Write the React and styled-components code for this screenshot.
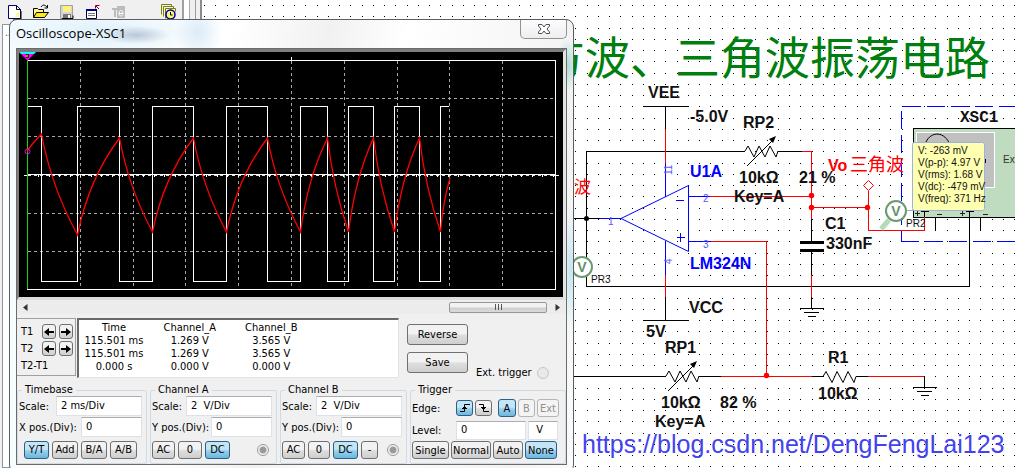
import styled, { createGlobalStyle, css } from "styled-components";

const GlobalStyle = createGlobalStyle`
  * {
    box-sizing: border-box;
  }
  body {
    margin: 0;
    background: #ffffff;
    font-family: "DejaVu Sans Condensed", "DejaVu Sans", sans-serif;
    font-size: 11px;
    color: #000000;
  }
`;

const Desktop = styled.div`
  position: relative;
  display: flex;
  height: 100vh;
  overflow: hidden;
`;

const SidePane = styled.div`
  display: flex;
  width: 202px;
  flex: none;
  background: #f0f0f0;
  border-right: 2px solid #8c8c8c;
`;

const SideColumn = styled.div`
  display: flex;
  flex-direction: column;
  width: 184px;
  border-right: 2px solid #a0a0a0;
`;

const Splitter = styled.div`
  width: 12px;
  border-right: 1px solid #9a9a9a;
  background: linear-gradient(90deg, #ffffff 5px, #a8a8a8 5px, #a8a8a8 6px, #f0f0f0 6px);
`;

const Toolbar = styled.div`
  display: flex;
  align-items: flex-end;
  gap: 10px;
  height: 24px;
  padding: 0 0 4px 7px;
`;

const ToolButton = styled.button`
  display: flex;
  width: 16px;
  height: 16px;
  padding: 0;
  border: none;
  background: none;
  &:last-child {
    margin-left: 23px;
  }
`;

const TreePane = styled.div`
  flex: 1;
  margin-left: 2px;
  padding: 2px;
  border: 1px solid #8a96a0;
  background: #ffffff;
  color: #555555;
  font-size: 10px;
  line-height: 12px;
`;

const Sheet = styled.div`
  flex: 1;
  min-width: 0;
  svg {
    display: block;
    width: 100%;
    height: 100%;
  }
`;

const Label = styled.text`
  font-family: "Liberation Sans", Arial, sans-serif;
  font-size: ${(props) => props.$size || 16}px;
  font-weight: ${(props) => (props.$plain ? 400 : 700)};
  fill: ${(props) => props.$color || "#111111"};
`;

const HanLabel = styled(Label)`
  font-family: "Noto Sans CJK SC", sans-serif;
  font-weight: 400;
`;

const MonoLabel = styled(Label)`
  font-family: "Liberation Mono", monospace;
`;

// the instrument window floats over the sheet
const Window = styled.section`
  position: absolute;
  left: 9px;
  top: 19px;
  width: 565px;
  padding: 0 6px 7px;
  border: 1px solid #5a5f63;
  border-radius: 8px;
  background:
    radial-gradient(ellipse 12px 26px at 557px 45px, #a9dcd0, transparent),
    radial-gradient(ellipse 10px 60px at 561px 250px, #c4e6f0, transparent),
    radial-gradient(ellipse 34px 9px at 126px 15px, #b9c8d8, transparent),
    radial-gradient(ellipse 24px 30px at 188px 12px, #dcebf8, transparent),
    radial-gradient(ellipse 110px 26px at 90px 12px, #dff0fa, transparent),
    linear-gradient(100deg, #f4fbff 0%, #ffffff 35%, #f1f1f1 50%, #ffffff 62%, #f3f3f3 90%, #fcfcfc 100%);
`;

const TitleBar = styled.header`
  display: flex;
  justify-content: space-between;
  align-items: flex-start;
  height: 28px;
`;

const WindowTitle = styled.h1`
  margin: 0;
  font: 400 13px/27px "Open Sans", sans-serif;
`;

const CloseButton = styled.button`
  display: flex;
  align-items: center;
  justify-content: center;
  width: 47px;
  height: 19px;
  padding: 0;
  border: 1px solid #8e9296;
  border-top: none;
  border-radius: 0 0 5px 5px;
  background: linear-gradient(#fdfdfd, #eeeeee);
`;

const Client = styled.div`
  border: 1px solid #6b6b6b;
  background: #f0f0f0;
`;

const Screen = styled.div`
  border-style: solid;
  border-width: 3px 3px 3px 2px;
  border-color: #7e7e7e #e4e4e4 #dcdcdc #7e7e7e;
  background: #000000;
  svg {
    display: block;
    width: 100%;
    height: 245px;
  }
`;

const ScrollBar = styled.div`
  display: flex;
  align-items: center;
  justify-content: space-between;
  height: 14px;
  padding: 0 6px;
  background: #ececec;
`;

const Thumb = styled.button`
  display: flex;
  align-items: center;
  justify-content: center;
  gap: 2px;
  width: 98px;
  height: 11px;
  margin: 0 8px 0 auto;
  padding: 0;
  border: 1px solid #979797;
  border-radius: 2px;
  background: linear-gradient(#f2f2f2 45%, #cfcfcf 55%, #dadada);
`;

const Grip = styled.span`
  width: 1px;
  height: 6px;
  background: #555555;
`;

const Readings = styled.div`
  display: flex;
  align-items: flex-start;
  margin: 4px 0 8px;
  height: 58px;
`;

const Cursors = styled.div`
  display: grid;
  grid-template-columns: 18px 14px 14px;
  column-gap: 3px;
  grid-template-rows: 17px 17px 16px;
  align-items: center;
  width: 59px;
  height: 58px;
  padding: 4px 0 0 4px;
  border-right: 1px solid #a0a0a0;
  border-bottom: 1px solid #a0a0a0;
  border-top: 1px solid #a0a0a0;
  margin-right: 1px;
`;

const CursorName = styled.span`
  white-space: nowrap;
`;

const ReadTable = styled.table`
  width: 322px;
  height: 58px;
  padding: 1px 86px 4px 0;
  border: 1px solid #dfe3e6;
  border-top: 2px solid #696969;
  border-left: 2px solid #696969;
  border-spacing: 0;
  background: #ffffff;
  table-layout: fixed;
  th,
  td {
    padding: 0;
    font-weight: 400;
    line-height: 13px;
    text-align: center;
    white-space: nowrap;
  }
  th:first-child {
    width: 70px;
  }
`;

const Actions = styled.div`
  display: flex;
  flex-direction: column;
  gap: 7px;
  padding: 6px 0 0 8px;
`;

const pressed = css`
  border-color: #2c5f85;
  background: linear-gradient(#c4e5f6 45%, #98d1ef 55%, #6db6dd);
`;

const Button = styled.button`
  display: flex;
  align-items: center;
  justify-content: center;
  width: ${(props) => props.$w}px;
  height: ${(props) => props.$h || 18}px;
  padding: 0;
  border: 1px solid #707070;
  border-radius: 3px;
  background: linear-gradient(#f2f2f2 45%, #dddddd 55%, #cfcfcf);
  font: inherit;
  color: #000000;
  ${(props) => props.$on && pressed}
  &:disabled {
    border-color: #b4b4b4;
    background: #f4f4f4;
    color: #909090;
  }
`;

const ExtTrigger = styled.label`
  display: flex;
  align-items: center;
  gap: 5px;
  margin: 48px 0 0 8px;
  white-space: nowrap;
`;

const Radio = styled.input`
  appearance: none;
  width: 12px;
  height: 12px;
  margin: 0;
  border: 1px solid ${(props) => (props.disabled ? "#c6c6c6" : "#9a9a9a")};
  border-radius: 50%;
  background: #e9e9e9;
  &:checked {
    background: radial-gradient(circle, #9a9a9a 3px, #f4f4f4 4px);
  }
`;

const Groups = styled.div`
  display: grid;
  grid-template-columns: 130px 127px 127px 1fr;
  gap: 3px;
`;

const Group = styled.fieldset`
  min-width: 0;
  margin: 0;
  padding: 0 4px 3px 1px;
  border: 1px solid #d0dbe3;
  border-radius: 2px;
`;

const Legend = styled.legend`
  margin-left: 3px;
  padding: 0 3px;
  line-height: 12px;
`;

const Field = styled.label`
  display: flex;
  align-items: center;
  justify-content: space-between;
  height: 20px;
  margin-bottom: 1px;
  white-space: nowrap;
`;

const TextBox = styled.input`
  width: ${(props) => props.$w}px;
  height: ${(props) => props.$h || 20}px;
  padding: 0 0 1px 4px;
  border: 1px solid #dde2ea;
  border-top-color: #abadb3;
  background: #ffffff;
  font: inherit;
  color: #000000;
`;

const ButtonRow = styled.div`
  display: flex;
  align-items: center;
  gap: 3px;
  height: 19px;
  margin-top: 3px;
  padding-left: ${(props) => props.$indent || 0}px;
  ${Radio} {
    margin: 0 3px 0 auto;
  }
`;

const TriggerRow = styled.div`
  display: flex;
  align-items: center;
  gap: 2px;
  height: ${(props) => props.$h}px;
`;

const TriggerName = styled.label`
  width: 42px;
`;

const Spacer = styled.span`
  width: 2px;
`;

const gridX = [80, 133, 185, 238, 291, 344, 397, 449, 502];
const gridY = [98, 136, 213, 251];

// x positions where the square wave falls and rises in turn
const edges = [41, 77, 119, 152, 193, 226, 267, 300, 327, 348, 373, 394, 419, 440];

const squarePath =
  "M27 106.5" +
  edges.map((x, i) => `H${x + 0.5}V${i % 2 ? 106.5 : 281.5}`).join("") +
  "H449";

const rampPoints = edges.map((x, i) => [x + 0.5, i % 2 ? (i === 1 ? 235 : 232) : i ? 138 : 134]);

const rampPath = rampPoints.slice(1).reduce((d, [x, y], i) => {
  const [px, py] = rampPoints[i];
  const ky = y > py ? 0.52 : 0.58;
  return `${d}Q${px + (x - px) * 0.27} ${py + (y - py) * ky} ${x} ${y}`;
}, "M27 151L34 142L41.5 134");

const axisTicks = Array.from({ length: 50 }, (_, i) => `M${38 + Math.round(i * 10.5)} 175v2`).join("");

const ZIGZAG = "l3 -5l6 11l5 -11l6 11l5 -11l6 11l2 -6";

function ScopeTrace() {
  return (
    <svg viewBox="19 52 544 245" preserveAspectRatio="none" fill="none">
      <g shapeRendering="crispEdges">
        <g stroke="#a8a8a8" strokeDasharray="3 3">
          {gridX.map((x) => (
            <path key={x} d={`M${x + 0.5} 61V289`} />
          ))}
          {gridY.map((y) => (
            <path key={y} d={`M28 ${y + 0.5}H553`} />
          ))}
        </g>
        <path d="M27 60.5H555.5V289.5H27" stroke="#fff" />
        <path d="M24 175.5H28M28 174.5H555M554 175.5H559M291.5 57V61" stroke="#fff" />
        <path d="M28 175.5H555" stroke="#ddd" strokeDasharray="3 3" />
        <path d={axisTicks} stroke="#fff" />
        <path d={squarePath} stroke="#fff" />
        <path d="M27.5 60V289" stroke="#12d912" />
      </g>
      <path d={`${rampPath}Q443 202 450 178`} stroke="#f00" strokeWidth="1.3" />
      <circle cx="27.5" cy="151.5" r="2.5" stroke="#e0e" />
      <path d="M19 52H36L27.500 60.500Z" fill="#f0f" />
      <path d="M19 52H36L34 54H21Z" fill="#0ff" />
      <path d="M26 54.500h2.500v1.500h-1.500h1.500v1.500h-2.500" stroke="#220" />
      <path d="M27 55v2" stroke="#ee0" />
    </svg>
  );
}

function Ground({ x, y }) {
  return <path d={`M${x - 12} ${y}h24M${x - 8} ${y + 4}h15M${x - 4} ${y + 8}h8`} stroke="#000" />;
}

function Potentiometer({ x, y }) {
  return (
    <g>
      <path d={`M${x} ${y}${ZIGZAG}`} stroke="#000" />
      <path d={`M${x + 2} ${y + 15}l28 -28`} stroke="#000" />
      <path d={`M${x + 31} ${y - 15}l-7 3l4 4z`} fill="#000" />
    </g>
  );
}

function Probe({ x, y, handle }) {
  return (
    <g>
      {handle && <path d={`M${x - 7} ${y + 9}l-8 9`} stroke="#b4dcb4" strokeWidth="5" />}
      <circle cx={x} cy={y} r="10" fill="#fff" stroke="#6c9a70" strokeWidth="2" />
      <Label x={x} y={y + 5} $size={14} $color="#66906a" textAnchor="middle">
        V
      </Label>
    </g>
  );
}

function Schematic() {
  return (
    <svg fill="none">
      <defs>
        <pattern id="dots" width="45" height="45" patternUnits="userSpaceOnUse" x="204" y="5">
          <path
            d={[0, 11, 23, 34].map((y) => [0, 11, 23, 34].map((x) => `M${x} ${y}h1v1h-1z`).join("")).join("")}
            fill="#000"
            shapeRendering="crispEdges"
          />
        </pattern>
      </defs>
      <g transform="translate(-202 0)">
        <rect x="202" width="4000" height="3000" fill="url(#dots)" />
        <HanLabel x="540" y="75" $size={45} $color="#007f0e">
          方波、三角波振荡电路
        </HanLabel>

        <g shapeRendering="crispEdges">
          <g stroke="#000">
            <path d="M643 106.500H689M665.500 106V129M665.500 297V320M643 320.500H689" />
            <path d="M745 151.500H586.500V286.500H969.500V213M778 151.500H802" />
            <path d="M574 218.500H600M574 376.500H666M699 376.500H721M812 376.500H823M856 376.500H868M924.500 376V387" />
            <path d="M811.500 219V241M811.500 251V275M811.500 297V308" />
            <path d="M800 242.500H824M800 250.500H824" strokeWidth="3" />
          </g>
          <g stroke="#f00">
            <path d="M665.500 129V163M665.500 275V297M802 151.500H811.500V219M710 196.500H811" />
            <path d="M711 241.500H766.500V376M721 376.500H812M868 376.500H924M811.500 275V297" />
            <path d="M811 207.500H868M868.500 191V230.500H924.500V213" />
          </g>
          <g stroke="#00f">
            <path d="M665.500 163V197M665.500 241V275M600 218.500H621M689 196.500H710M689 241.500H711" />
            <path d="M676 200.500H684M677 237.500H685M680.500 233V242" />
            <path d="M903 106.500H1400M901 241.500H1400" strokeDasharray="18 6" />
            <path d="M901.500 111V241" strokeDasharray="18 6" />
          </g>
        </g>
        <path d="M621 218.500L688.500 185.500V251.500Z" stroke="#00f" />
        <path d="M868.500 180.500l5 5l-5 5l-5 -5z" fill="#fff" stroke="#f00" />
        <path d={`M823 376.500${ZIGZAG}`} stroke="#000" />
        <Potentiometer x={745} y={151} />
        <Potentiometer x={666} y={376} />
        <Ground x={812} y={308.5} />
        <Ground x={925} y={387.5} />
        <circle cx="586.500" cy="218.500" r="2.500" fill="#000" />
        {[
          [811.5, 195.5],
          [811.5, 207.5],
          [867.5, 207.5],
          [766.5, 375.5],
        ].map(([x, y]) => (
          <circle key={`${x}-${y}`} cx={x} cy={y} r="2.700" fill="#f00" />
        ))}

        <Label x="648" y="98">VEE</Label>
        <Label x="690" y="122">-5.0V</Label>
        <Label x="743" y="128">RP2</Label>
        <Label x="739" y="183">10kΩ</Label>
        <Label x="734" y="202">Key=A</Label>
        <Label x="799" y="183">21 %</Label>
        <Label x="825" y="229">C1</Label>
        <Label x="826" y="249">330nF</Label>
        <Label x="689" y="313">VCC</Label>
        <Label x="646" y="337">5V</Label>
        <Label x="665" y="353">RP1</Label>
        <Label x="661" y="408">10kΩ</Label>
        <Label x="720" y="408">82 %</Label>
        <Label x="655" y="427">Key=A</Label>
        <Label x="828" y="363">R1</Label>
        <Label x="818" y="399">10kΩ</Label>
        <Label x="690" y="177" $color="#00f">U1A</Label>
        <Label x="690" y="269" $color="#00f">LM324N</Label>
        <Label x="703" y="202" $size={10} $plain $color="#55f">2</Label>
        <Label x="703" y="248" $size={10} $plain $color="#55f">3</Label>
        <Label x="608" y="225" $size={10} $plain $color="#55f">1</Label>
        <Label transform="translate(672 175) rotate(-90)" $size={10} $plain $color="#55f">11</Label>
        <Label transform="translate(672 264) rotate(-90)" $size={10} $plain $color="#55f">4</Label>
        <Label x="828" y="171" $color="#f00">Vo</Label>
        <HanLabel x="850" y="171" $size={18} $color="#f00">三角波</HanLabel>
        <HanLabel x="574" y="193" $size={17} $color="#f00">波</HanLabel>
        <MonoLabel x="960" y="122">XSC1</MonoLabel>

        <rect x="913.500" y="128.500" width="300" height="89" fill="#c0dcc0" stroke="#000" />
        <rect x="916.500" y="132.500" width="78" height="55" fill="#c0c0c0" stroke="#fff" />
        <path d="M926 142C931 131 945 131 950 145" stroke="#000" />
        <path d="M985.500 159v4" stroke="#000" />
        <path d="M921 211.500h8M924.500 211v6M935.500 217v14M966 211.500h8M969.500 211v19M980.500 217v14" stroke="#000" />
        <path d="M915 213.500h5M917.500 211v5M937 214.500h5M960 213.500h5M962.500 211v5M983 214.500h5" stroke="#222" />
        <path d="M924.500 217V230.500" stroke="#f00" />
        <Label x="1003" y="163" $size={10} $plain $color="#333">Ext</Label>

        <rect x="912.500" y="142.500" width="72" height="68" rx="2" fill="#ffffb0" stroke="#9cb2dc" />
        <Label $size={10} $plain>
          <tspan x="918" y="154">V: -263 mV</tspan>
          <tspan x="918" y="166">V(p-p): 4.97 V</tspan>
          <tspan x="918" y="178">V(rms): 1.68 V</tspan>
          <tspan x="918" y="190">V(dc): -479 mV</tspan>
          <tspan x="918" y="202">V(freq): 371 Hz</tspan>
        </Label>
        <path d="M907 210.500H913" stroke="#9cb2dc" />
        <Probe x={896} y={211} handle />
        <Probe x={582} y={267} />
        <Label x="906" y="227" $size={10} $plain>PR2</Label>
        <Label x="591" y="283" $size={10} $plain>PR3</Label>
        <a href="https://blog.csdn.net/DengFengLai123">
          <Label x="582" y="453" $size={25} $plain $color="#4343ee">
            https://blog.csdn.net/DengFengLai123
          </Label>
        </a>
      </g>
    </svg>
  );
}

function ToolIcons() {
  return (
    <Toolbar>
      <ToolButton aria-label="New">
        <svg width="16" height="16" viewBox="0 0 16 16">
          <path d="M1.500 1.500h8l4 4v9h-12z" fill="#fff" stroke="#000080" />
          <path d="M9.500 1.500v4h4M14 7v8H6" fill="none" stroke="#000" />
          <path d="M9 10l3-2v5H8z" fill="#fff68a" />
        </svg>
      </ToolButton>
      <ToolButton aria-label="Open">
        <svg width="16" height="16" viewBox="0 0 16 16">
          <path d="M0.500 13.500v-9h4l1 1h5v3" fill="#fff68a" stroke="#000" />
          <path d="M0.500 13.500l3-5h12l-4 5z" fill="#ffe818" stroke="#000" />
          <path d="M8 3c2-3 4-2 6 0M14.500 1v3h-3" fill="none" stroke="#000" />
        </svg>
      </ToolButton>
      <ToolButton aria-label="Save circuit">
        <svg width="16" height="16" viewBox="0 0 16 16">
          <path d="M1.500 1.500h12v13h-12z" fill="#d4d4d4" stroke="#a0a0a0" />
          <path d="M4 2h8v6H4z" fill="#fff27a" />
          <path d="M4 10h8v4H4z" fill="#777" />
          <path d="M9 11h2v3H9z" fill="#fff" />
          <path d="M3 14.500h11v-3" fill="none" stroke="#000" />
        </svg>
      </ToolButton>
      <ToolButton aria-label="Properties">
        <svg width="16" height="16" viewBox="0 0 16 16">
          <path d="M1.500 5.500h10v9h-10z" fill="#fff" stroke="#000040" />
          <path d="M1 5h11v2H1z" fill="#000080" />
          <path d="M3 9.500h7M3 11.500h7" stroke="#777" />
          <path d="M14 5l-3-3M10.500 4.500v-3h4" stroke="#900020" fill="none" />
        </svg>
      </ToolButton>
      <ToolButton aria-label="Text" disabled>
        <svg width="16" height="16" viewBox="0 0 16 16">
          <path d="M6 2h8v12H6z" fill="#bcbcbc" />
          <path d="M1 5h6M4 5v8" stroke="#bbb" strokeWidth="2" />
          <path d="M8 9.500h4c0-4-4-4-4 0c0 3 3 3 4 1" stroke="#fff" fill="none" />
        </svg>
      </ToolButton>
      <ToolButton aria-label="History">
        <svg width="16" height="16" viewBox="0 0 16 16">
          <path d="M1.500 10.500v-10h10v2M3.500 12.500v-10h10v2M5.500 14.500v-10h10v3" fill="none" stroke="#808000" />
          <circle cx="10.500" cy="10.500" r="4.500" fill="#fff27a" stroke="#000090" strokeWidth="1.500" />
          <path d="M10.500 8v3h2" stroke="#000" fill="none" />
        </svg>
      </ToolButton>
    </Toolbar>
  );
}

function Arrow({ left }) {
  return (
    <svg width="10" height="8" viewBox="0 0 10 8">
      <path d={left ? "M0 4l5-4v3h5v2H5v3z" : "M10 4L5 0v3H0v2h5v3z"} fill="#000" />
    </svg>
  );
}

const readings = [
  ["115.501 ms", "1.269 V", "3.565 V"],
  ["115.501 ms", "1.269 V", "3.565 V"],
  ["0.000 s", "0.000 V", "0.000 V"],
];

function ScaleFields({ axis, scale }) {
  return (
    <>
      <Field>
        Scale:
        <TextBox $w={86} defaultValue={scale} />
      </Field>
      <Field>
        {axis} pos.(Div):
        <TextBox $w={61} defaultValue="0" />
      </Field>
    </>
  );
}

function Oscilloscope() {
  return (
    <Window>
      <TitleBar>
        <WindowTitle>Oscilloscope-XSC1</WindowTitle>
        <CloseButton aria-label="Close">
          <svg width="12" height="10" viewBox="0 0 12 10">
            <path
              d="M0.500 0.500h3.500l2 2.500l2 -2.500h3.500v1.500l-2.500 3l2.500 3v1.500h-3.500l-2 -2.500l-2 2.500h-3.500v-1.500l2.500 -3l-2.500 -3z"
              fill="#fff"
              stroke="#4a4f5c"
            />
          </svg>
        </CloseButton>
      </TitleBar>
      <Client>
        <Screen>
          <ScopeTrace />
        </Screen>
        <ScrollBar>
          <svg width="5" height="7" viewBox="0 0 5 7">
            <path d="M4.500 0v7L0 3.500z" fill="#333" />
          </svg>
          <Thumb aria-label="Scroll">
            <Grip />
            <Grip />
            <Grip />
          </Thumb>
          <svg width="5" height="7" viewBox="0 0 5 7">
            <path d="M0.500 0v7L5 3.500z" fill="#333" />
          </svg>
        </ScrollBar>

        <Readings>
          <Cursors>
            <CursorName>T1</CursorName>
            <Button $w={14} $h={15} aria-label="T1 left"><Arrow left /></Button>
            <Button $w={14} $h={15} aria-label="T1 right"><Arrow /></Button>
            <CursorName>T2</CursorName>
            <Button $w={14} $h={15} aria-label="T2 left"><Arrow left /></Button>
            <Button $w={14} $h={15} aria-label="T2 right"><Arrow /></Button>
            <CursorName>T2-T1</CursorName>
          </Cursors>
          <ReadTable>
            <thead>
              <tr>
                <th>Time</th>
                <th>Channel_A</th>
                <th>Channel_B</th>
              </tr>
            </thead>
            <tbody>
              {readings.map((row, i) => (
                <tr key={i}>
                  {row.map((cell, j) => (
                    <td key={j}>{cell}</td>
                  ))}
                </tr>
              ))}
            </tbody>
          </ReadTable>
          <Actions>
            <Button $w={61} $h={21}>Reverse</Button>
            <Button $w={61} $h={21}>Save</Button>
          </Actions>
          <ExtTrigger>
            Ext. trigger
            <Radio type="radio" disabled />
          </ExtTrigger>
        </Readings>

        <Groups>
          <Group>
            <Legend>Timebase</Legend>
            <ScaleFields axis="X" scale="2 ms/Div" />
            <ButtonRow $indent={5}>
              <Button $w={25} $on>Y/T</Button>
              <Button $w={26}>Add</Button>
              <Button $w={26}>B/A</Button>
              <Button $w={27}>A/B</Button>
            </ButtonRow>
          </Group>
          <Group>
            <Legend>Channel A</Legend>
            <ScaleFields axis="Y" scale="2  V/Div" />
            <ButtonRow>
              <Button $w={23}>AC</Button>
              <Button $w={24}>0</Button>
              <Button $w={25} $on>DC</Button>
              <Radio type="radio" name="chA" defaultChecked aria-label="Channel A terminal" />
            </ButtonRow>
          </Group>
          <Group>
            <Legend>Channel B</Legend>
            <ScaleFields axis="Y" scale="2  V/Div" />
            <ButtonRow>
              <Button $w={23}>AC</Button>
              <Button $w={22}>0</Button>
              <Button $w={25} $on>DC</Button>
              <Button $w={17}>-</Button>
              <Radio type="radio" name="chB" defaultChecked aria-label="Channel B terminal" />
            </ButtonRow>
          </Group>
          <Group>
            <Legend>Trigger</Legend>
            <TriggerRow $h={24}>
              <TriggerName as="span">Edge:</TriggerName>
              <Button $w={17} $h={16} $on aria-label="Rising edge">
                <svg width="10" height="10" viewBox="0 0 10 10" fill="none" stroke="#000">
                  <path d="M0 8.500h4.500v-7H10M2 5.500h5M3 4.500h3" />
                </svg>
              </Button>
              <Button $w={17} $h={16} aria-label="Falling edge">
                <svg width="10" height="10" viewBox="0 0 10 10" fill="none" stroke="#000">
                  <path d="M0 1.500h4.500v7H10M2 4.500h5M3 5.500h3" />
                </svg>
              </Button>
              <Spacer />
              <Button $w={18} $on>A</Button>
              <Button $w={17} disabled>B</Button>
              <Button $w={22} disabled>Ext</Button>
            </TriggerRow>
            <TriggerRow $h={20}>
              <TriggerName htmlFor="level">Level:</TriggerName>
              <TextBox id="level" $w={70} $h={19} defaultValue="0" />
              <TextBox aria-label="Level unit" $w={30} $h={19} defaultValue=" V" />
            </TriggerRow>
            <TriggerRow $h={20}>
              <Button $w={37}>Single</Button>
              <Button $w={40}>Normal</Button>
              <Button $w={30}>Auto</Button>
              <Button $w={32} $on>None</Button>
            </TriggerRow>
          </Group>
        </Groups>
      </Client>
    </Window>
  );
}

export default function App() {
  return (
    <>
      <GlobalStyle />
      <Desktop>
        <SidePane>
          <SideColumn>
            <ToolIcons />
            <TreePane>..</TreePane>
          </SideColumn>
          <Splitter />
        </SidePane>
        <Sheet>
          <Schematic />
        </Sheet>
        <Oscilloscope />
      </Desktop>
    </>
  );
}
